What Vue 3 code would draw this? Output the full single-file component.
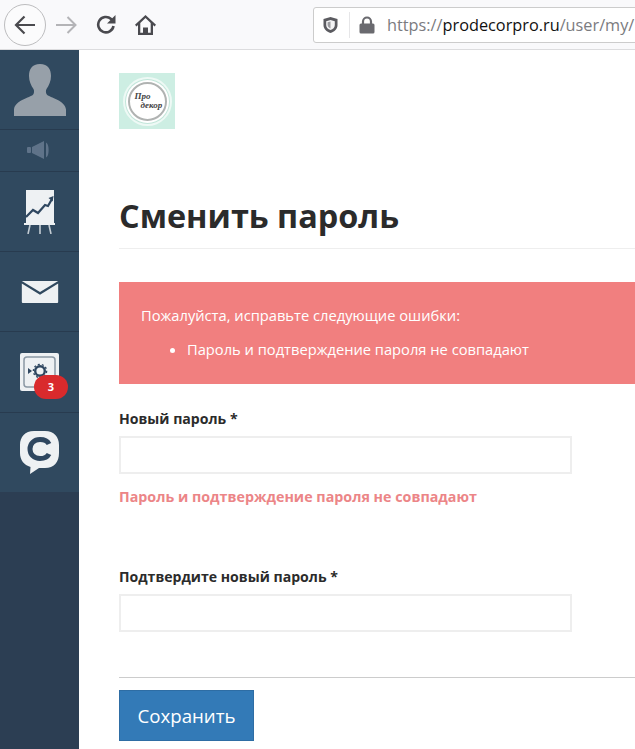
<script setup>
const navItems = ['chart', 'mail', 'safe', 'chat']
</script>

<template>
  <div class="page">
    <header class="toolbar">
      <button class="back-btn" aria-label="Назад">
        <svg width="22" height="20" viewBox="0 0 22 20" fill="none" stroke="#4a4a4f" stroke-width="2.2">
          <path d="M21 10H2M10.500 1.500L2 10l8.500 8.500" />
        </svg>
      </button>
      <svg class="forward" width="21" height="18" viewBox="0 0 21 18" fill="none" stroke="#b4b4b7" stroke-width="2">
        <path d="M0 9h19M11.500 1l8 8-8 8" />
      </svg>
      <svg class="reload" width="20" height="19" viewBox="0 0 20 19" fill="none" stroke="#4a4a4f" stroke-width="2.6">
        <path d="M17.500 11a7.700 7.700 0 1 1-2.400-7l2.500 2.800" />
        <path d="M19.500 0v8.500h-8.500" fill="#4a4a4f" stroke="none" />
      </svg>
      <svg class="home" width="21" height="20" viewBox="0 0 21 20" fill="#4a4a4f">
        <path d="M10.500 0L0 9.800l1.500 1.600 1.500-1.400V20h15V10l1.500 1.400L21 9.800zM10.500 3.100l5.200 4.900V17.800h-2.700v-5.300H8v5.300H5.300V8z" />
        <rect x="9.200" y="13.800" width="2.600" height="4.500" />
      </svg>
      <div class="urlbar">
        <svg class="shield" width="17" height="18" viewBox="0 0 17 18">
          <path d="M8.500 1L15.500 3V9c0 4-3 6.800-7 8-4-1.200-7-4-7-8V3z" fill="#5b5b60" />
          <path d="M8.500 4L12.800 5.200V9c0 2.500-1.800 4.200-4.300 5.100C6 13.200 4.200 11.500 4.200 9V5.200z" fill="#f4f4f5" />
          <path d="M8.500 5.500V12.500C6.800 11.800 5.600 10.500 5.600 9V6.300z" fill="#9a9a9e" />
        </svg>
        <span class="divider"></span>
        <svg class="lock" width="16" height="18" viewBox="0 0 16 18">
          <path d="M4 8V5.500a4 4 0 0 1 8 0V8" fill="none" stroke="#6a6a6f" stroke-width="2.200" />
          <rect x="0.500" y="7.500" width="15" height="10" rx="1.500" fill="#6a6a6f" />
        </svg>
        <span class="url"><span class="muted">https://</span>prodecorpro.ru<span class="muted">/user/my/</span></span>
      </div>
    </header>

    <div class="body">
      <aside class="sidebar">
        <div class="side-avatar">
          <svg width="54" height="52" viewBox="0 0 54 52" fill="#97a0a9">
            <path d="M27 0c-8 0-11 5-11 12 0 5 2 9.500 4.500 13 .8 1.500.8 4-.3 5.500C17 34 2 36 1 45.500V52h52v-6.500c-1-9.500-16-11.500-19.200-15-1.100-1.500-1.100-4-.3-5.500C36 21.500 38 17 38 12c0-7-3-12-11-12z" />
          </svg>
        </div>
        <div class="side-sound">
          <svg width="26" height="18" viewBox="0 0 26 18" fill="#5f7389">
            <rect x="0" y="6" width="4" height="6" rx="1" />
            <path d="M5 6l12-6v18L5 12z" />
            <path d="M19 1.500c3.500 1 3.500 14 0 15z" />
          </svg>
        </div>
        <div v-for="item in navItems" :key="item" class="side-item" :class="'side-' + item">
          <svg v-if="item === 'chart'" width="31" height="44" viewBox="0 0 31 44">
            <rect x="2" y="0" width="28" height="33" fill="#eef1f3" />
            <path d="M2 27l7-7 5 3 7-8 3 1 4-7" fill="none" stroke="#2f4760" stroke-width="2.200" />
            <path d="M24.500 8l5-2-.8 5.500z" fill="#2f4760" />
            <rect x="0" y="33" width="31" height="2" fill="#eef1f3" />
            <path d="M6 35l-2 9M16 35v9M25 35l2 9" stroke="#c3ccd3" stroke-width="1.600" />
          </svg>
          <svg v-else-if="item === 'mail'" width="38" height="22" viewBox="0 0 38 23">
            <path d="M0 0h38L19 11.500z" fill="#eef1f3" />
            <path d="M0 2.500v19.500a1 1 0 0 0 1 1h36a1 1 0 0 0 1-1V2.500L19 14.500z" fill="#eef1f3" />
          </svg>
          <template v-else-if="item === 'safe'">
            <svg width="39" height="38" viewBox="0 0 39 38">
              <rect width="39" height="38" rx="2" fill="#eef1f3" />
              <rect x="4" y="4" width="31" height="30" rx="3" fill="none" stroke="#8b98a4" stroke-width="1.500" />
              <circle cx="20" cy="18" r="4.800" fill="none" stroke="#2f4760" stroke-width="2.400" />
              <circle cx="20" cy="18" r="6.600" fill="none" stroke="#2f4760" stroke-width="1.400" stroke-dasharray="2 2.100" />
              <path d="M8 15l4 3-4 3z" fill="#2f4760" />
            </svg>
            <span class="badge">3</span>
          </template>
          <svg v-else width="39" height="43" viewBox="0 0 39 43">
            <path d="M14 0h11c9 0 14 6 14 14v8c0 9-5 15-14 15h-6l-9 6 .5-7C4 34 0 29 0 22v-8C0 6 5 0 14 0z" fill="#eef1f3" />
            <path d="M29 13c-1.500-3-5-4.500-9-4.500-6 0-10 4-10 9.500s4 9.500 10 9.500c4 0 7.500-1.500 9-4.500" fill="none" stroke="#2f4760" stroke-width="5" />
          </svg>
        </div>
      </aside>

      <main class="content">
        <div class="logo">
          <div class="logo-ring">
            <span class="logo-top">Про</span>
            <span class="logo-bottom">декор</span>
          </div>
        </div>
        <h1>Сменить пароль</h1>

        <div class="alert">
          <p>Пожалуйста, исправьте следующие ошибки:</p>
          <ul>
            <li>Пароль и подтверждение пароля не совпадают</li>
          </ul>
        </div>

        <form class="form" @submit.prevent>
          <div class="field has-error">
            <label for="pw">Новый пароль *</label>
            <input id="pw" type="password" />
            <p class="help">Пароль и подтверждение пароля не совпадают</p>
          </div>
          <div class="field confirm">
            <label for="pw2">Подтвердите новый пароль *</label>
            <input id="pw2" type="password" />
          </div>
          <div class="actions">
            <button type="submit" class="save">Сохранить</button>
          </div>
        </form>
      </main>
    </div>
  </div>
</template>

<style>
html,
body {
  margin: 0;
  overflow: hidden;
  background: #fff;
}
</style>

<style scoped>
.page {
  width: 635px;
  height: 749px;
  overflow: hidden;
  font-family: "Open Sans", "Liberation Sans", sans-serif;
  display: flex;
  flex-direction: column;
}

.toolbar {
  height: 49px;
  flex: none;
  border-bottom: 1px solid #dcdcde;
  background: #f9f9fb;
  display: flex;
  align-items: center;
  padding-left: 4px;
}

.toolbar > * {
  flex: none;
}

.back-btn {
  width: 42px;
  height: 42px;
  padding: 0;
  border: 1px solid #bdbdbf;
  border-radius: 50%;
  background: #fbfbfc;
  display: flex;
  align-items: center;
  justify-content: center;
}

.forward {
  margin-left: 10px;
}

.reload {
  margin-left: 19px;
}

.home {
  margin-left: 19px;
}

.urlbar {
  margin-left: 157px;
  width: 340px;
  height: 36px;
  box-sizing: border-box;
  background: #fff;
  border: 1px solid #ccc;
  border-radius: 3px;
  display: flex;
  align-items: center;
  padding-left: 8px;
  white-space: nowrap;
}

.shield,
.lock {
  flex: none;
}

.divider {
  flex: none;
  width: 1px;
  height: 26px;
  background: #e6e6e8;
  margin: 0 9px 0 10px;
}

.lock {
  margin-right: 12px;
}

.url {
  font-size: 16.3px;
  color: #111;
}

.muted {
  color: #7b7b80;
}

.body {
  flex: 1;
  display: flex;
  min-height: 0;
}

.sidebar {
  width: 79px;
  flex: none;
  background: #2c3e53;
  display: flex;
  flex-direction: column;
}

.side-avatar,
.side-sound,
.side-item {
  background: #30495f;
  border-bottom: 1px solid #283b4f;
  display: flex;
  align-items: center;
  justify-content: center;
  position: relative;
}

.side-avatar {
  height: 80px;
  padding-top: 1px;
  box-sizing: border-box;
}

.side-sound {
  height: 42px;
  padding-bottom: 2px;
  box-sizing: border-box;
}

.side-item {
  height: 80px;
  box-sizing: border-box;
}

.side-safe {
  height: 81px;
}

.side-chat {
  height: 79px;
  border-bottom: none;
}

.badge {
  position: absolute;
  left: 34px;
  top: 43px;
  width: 34px;
  height: 24px;
  border-radius: 12px;
  background: #d92a2c;
  color: #fff;
  font-size: 11px;
  font-weight: 700;
  line-height: 24px;
  text-align: center;
}

.content {
  flex: none;
  width: 556px;
  padding: 23px 0 0 40px;
  box-sizing: border-box;
  color: #2b2b2b;
}

.logo {
  width: 56px;
  height: 56px;
  background: #cdeee3;
  display: flex;
  align-items: center;
  justify-content: center;
}

.logo-ring {
  width: 39px;
  height: 39px;
  box-sizing: border-box;
  border-radius: 50%;
  background: #fff;
  border: 2px solid #b0b3b2;
  box-shadow: 0 0 0 2px #fff, 0 0 0 3px #c2e6da, 0 0 0 5px #eef9f5;
  font-family: "Liberation Serif", serif;
  font-size: 9px;
  font-style: italic;
  font-weight: 700;
  line-height: 9px;
  color: #444;
  display: flex;
  flex-direction: column;
  justify-content: center;
  padding-left: 5px;
}

.logo-bottom {
  margin-left: 6px;
}

h1 {
  margin: 64px 0 0;
  font-size: 32.4px;
  line-height: 45px;
  font-weight: 700;
  color: #2b2b2b;
  padding-bottom: 10px;
  border-bottom: 1px solid #eeeeee;
}

.alert {
  margin-top: 33px;
  width: 620px;
  height: 102px;
  box-sizing: border-box;
  background: #f17f7f;
  color: #fff;
  font-size: 14.7px;
  padding: 22px 0 0 22px;
}

.alert p {
  margin: 0;
  line-height: 22px;
}

.alert ul {
  margin: 12px 0 0;
  padding-left: 46px;
  line-height: 22px;
}

.form {
  margin-top: 25px;
}

.field label {
  display: block;
  font-size: 14.1px;
  line-height: 19px;
  font-weight: 700;
  margin-bottom: 8px;
}

.field input {
  display: block;
  width: 453px;
  height: 38px;
  box-sizing: border-box;
  border: 2px solid #eeeeee;
  background: #fff;
  outline: none;
}

.help {
  margin: 13px 0 0;
  font-size: 14.3px;
  line-height: 20px;
  font-weight: 700;
  color: #ec8587;
}

.confirm {
  margin-top: 60px;
}

.actions {
  margin-top: 45px;
  border-top: 1px solid #cccccc;
  padding-top: 12px;
}

.save {
  width: 135px;
  height: 51px;
  border: 1px solid #2e6da4;
  background: #337ab7;
  color: #fff;
  font-family: inherit;
  font-size: 18.7px;
  padding: 0;
}
</style>
